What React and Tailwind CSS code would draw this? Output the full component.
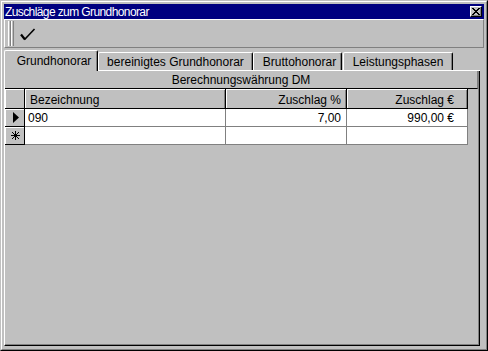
export default function App() {
  return (
    <div className="w-[488px] h-[351px] bg-[#c0c0c0] border border-t-[#c0c0c0] border-l-[#c0c0c0] border-r-black border-b-black font-['Liberation_Sans',Arial,sans-serif] text-black">
      <div className="h-full border border-t-white border-l-white border-r-[#808080] border-b-[#808080] p-[2px] flex flex-col">
        {/* Caption */}
        <div className="h-[15px] bg-[#000080] flex items-center justify-between pl-[1px] pr-[2px] shrink-0">
          <span className="text-white text-[12px] leading-none tracking-[-0.6px] whitespace-nowrap">
            Zuschläge zum Grundhonorar
          </span>
          <div className="w-[12px] h-[11px] bg-[#c0c0c0] border border-t-white border-l-white border-r-black border-b-black shadow-[inset_-1px_-1px_0_#808080] flex items-center justify-center">
            <svg width="8" height="7" viewBox="0 0 8 7" shapeRendering="crispEdges">
              <path d="M0 0h2v1h-2z M6 0h2v1h-2z M1 1h2v1h-2z M5 1h2v1h-2z M2 2h4v1h-4z M3 3h2v1h-2z M2 4h4v1h-4z M1 5h2v1h-2z M5 5h2v1h-2z M0 6h2v1h-2z M6 6h2v1h-2z" fill="black" />
            </svg>
          </div>
        </div>

        {/* Toolbar */}
        <div className="h-[29px] shrink-0 border border-t-white border-l-white border-r-[#808080] border-b-[#808080] flex items-center pl-[3px]">
          <div className="flex h-[25px]">
            <div className="w-[3px] h-full border-l border-r border-l-white border-r-[#808080]" />
            <div className="w-[3px] h-full border-l border-r border-l-white border-r-[#808080]" />
          </div>
          <svg className="ml-[6px] mt-[2px]" width="16" height="14" viewBox="0 0 16 14">
            <path d="M1 6.5 L5 11.5" stroke="black" strokeWidth="2.2" fill="none" />
            <path d="M4.6 11.5 L14.5 1" stroke="black" strokeWidth="1.6" fill="none" />
          </svg>
        </div>

        <div className="h-[2px] shrink-0" />

        {/* Tabs */}
        <div className="w-[476px] h-[21px] shrink-0 flex items-end border-b border-b-white text-[12px] leading-none">
          <div className="relative z-10 w-[94px] h-[21px] -mb-px bg-[#c0c0c0] border-t border-l border-r border-t-white border-l-white border-r-black shadow-[inset_-1px_0_0_#808080] rounded-tl-[2px] rounded-tr-[2px] flex items-center justify-center pl-[6px] pb-[1px]">
            Grundhonorar
          </div>
          <div className="w-[155px] h-[18px] bg-[#c0c0c0] border-t border-l border-r border-t-white border-l-white border-r-black shadow-[inset_-1px_0_0_#808080] rounded-tl-[2px] rounded-tr-[2px] flex items-center justify-center whitespace-nowrap">
            bereinigtes Grundhonorar
          </div>
          <div className="w-[89px] h-[18px] bg-[#c0c0c0] border-t border-l border-r border-t-white border-l-white border-r-black shadow-[inset_-1px_0_0_#808080] rounded-tl-[2px] rounded-tr-[2px] flex items-center justify-center pl-[4px]">
            Bruttohonorar
          </div>
          <div className="ml-px w-[110px] h-[18px] bg-[#c0c0c0] border-t border-l border-r border-t-white border-l-white border-r-black shadow-[inset_-1px_0_0_#808080] rounded-tl-[2px] rounded-tr-[2px] flex items-center justify-center">
            Leistungsphasen
          </div>
        </div>

        {/* Panel */}
        <div className="w-[476px] h-[275px] shrink-0 border-l border-r border-b border-l-white border-r-black border-b-black shadow-[inset_-1px_-1px_0_#808080] flex flex-col text-[12px] leading-none">
          <div className="h-[18px] w-[473px] shrink-0 border-b border-r border-b-black border-r-[#808080] flex items-center justify-center">
            Berechnungswährung DM
          </div>

          {/* Header row */}
          <div className="flex h-[20px] shrink-0 border-b border-b-black w-[463px]">
            <div className="w-[20px] h-full bg-[#c0c0c0] border-r border-r-black shadow-[inset_1px_1px_0_#fff]" />
            <div className="w-[201px] h-full border-r border-r-black shadow-[inset_1px_1px_0_#fff,inset_-1px_0_0_#808080] flex items-center pl-[5px] pt-[2px]">
              Bezeichnung
            </div>
            <div className="w-[121px] h-full border-r border-r-black shadow-[inset_1px_1px_0_#fff,inset_-1px_0_0_#808080] flex items-center justify-end pr-[5px] pt-[2px]">
              Zuschlag %
            </div>
            <div className="w-[121px] h-full border-r border-r-black shadow-[inset_1px_1px_0_#fff,inset_-1px_0_0_#808080] flex items-center justify-end pr-[13px] pt-[2px]">
              Zuschlag €
            </div>
          </div>

          {/* Row 1 */}
          <div className="flex h-[18px] shrink-0 w-[463px]">
            <div className="w-[20px] h-full bg-[#c0c0c0] border-r border-b border-r-black border-b-black shadow-[inset_1px_1px_0_#fff] flex items-center pl-[8px]">
              <svg width="6" height="11" viewBox="0 0 6 11">
                <path d="M0 0 L6 5.5 L0 11 Z" fill="black" />
              </svg>
            </div>
            <div className="w-[201px] h-full bg-white border-r border-b border-[#808080] flex items-center pl-[3px]">
              090
            </div>
            <div className="w-[121px] h-full bg-white border-r border-b border-[#808080] flex items-center justify-end pr-[5px]">
              7,00
            </div>
            <div className="w-[121px] h-full bg-white border-r border-b border-[#808080] flex items-center justify-end pr-[13px]">
              990,00 €
            </div>
          </div>

          {/* Row 2 (new) */}
          <div className="flex h-[18px] shrink-0 w-[463px]">
            <div className="w-[20px] h-full bg-[#c0c0c0] border-r border-b border-r-black border-b-black shadow-[inset_1px_1px_0_#fff] flex items-center pl-[6px]">
              <svg width="9" height="9" viewBox="0 0 9 9" shapeRendering="crispEdges">
                <path d="M4.5 0 V9 M0 4.5 H9 M1 1 L8 8 M8 1 L1 8" stroke="black" strokeWidth="1" fill="none" />
              </svg>
            </div>
            <div className="w-[201px] h-full bg-white border-r border-b border-[#808080]" />
            <div className="w-[121px] h-full bg-white border-r border-b border-[#808080]" />
            <div className="w-[121px] h-full bg-white border-r border-b border-[#808080]" />
          </div>
        </div>
      </div>
    </div>
  );
}
